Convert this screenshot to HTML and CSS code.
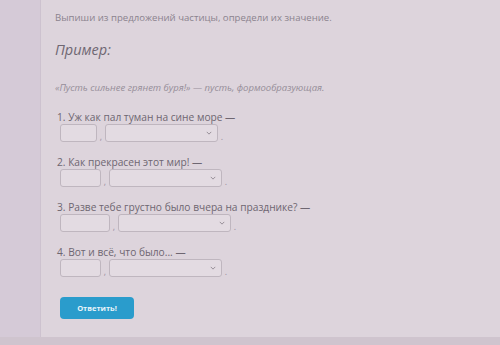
FILE: index.html
```html
<!DOCTYPE html>
<html lang="ru">
<head>
    <meta charset="UTF-8">
    <meta name="viewport" content="width=device-width, initial-scale=1.0">
    <title>Частицы</title>
    <link rel="stylesheet" href="styles.css">
</head>
<body>
    <div class="screen">
        <div class="side"></div>

        <div class="panel">
            <p class="task">Выпиши из предложений частицы, определи их значение.</p>

            <h2 class="example-title">Пример:</h2>
            <p class="example">«Пусть сильнее грянет буря!» — пусть, формообразующая.</p>

            <!-- Вопросы -->
            <div class="item">
                <div class="label">1. Уж как пал туман на сине море —</div>
                <div class="answer">
                    <span class="box w1"></span><span class="sep">,</span>
                    <span class="select"><svg viewBox="0 0 8 5" width="6" height="4"><path d="M1 1l3 3 3-3" fill="none" stroke="#8f8790" stroke-width="1.2"/></svg></span><span class="sep">.</span>
                </div>
            </div>

            <div class="item">
                <div class="label">2. Как прекрасен этот мир! —</div>
                <div class="answer">
                    <span class="box w2"></span><span class="sep">,</span>
                    <span class="select"><svg viewBox="0 0 8 5" width="6" height="4"><path d="M1 1l3 3 3-3" fill="none" stroke="#8f8790" stroke-width="1.2"/></svg></span><span class="sep">.</span>
                </div>
            </div>

            <div class="item">
                <div class="label">3. Разве тебе грустно было вчера на празднике? —</div>
                <div class="answer">
                    <span class="box w3"></span><span class="sep">,</span>
                    <span class="select"><svg viewBox="0 0 8 5" width="6" height="4"><path d="M1 1l3 3 3-3" fill="none" stroke="#8f8790" stroke-width="1.2"/></svg></span><span class="sep">.</span>
                </div>
            </div>

            <div class="item">
                <div class="label">4. Вот и всё, что было... —</div>
                <div class="answer">
                    <span class="box w2"></span><span class="sep">,</span>
                    <span class="select"><svg viewBox="0 0 8 5" width="6" height="4"><path d="M1 1l3 3 3-3" fill="none" stroke="#8f8790" stroke-width="1.2"/></svg></span><span class="sep">.</span>
                </div>
            </div>

            <button class="btn-answer">Ответить!</button>
        </div>
    </div>
</body>
</html>
```

FILE: styles.css
```css
/* Style général */
body {
    margin: 0;
    background-color: #cfc4ce;
    font-family: 'Open Sans', 'Noto Sans', sans-serif;
    color: #7d7480;
}

.screen {
    display: flex;
    height: 337px;
}

.side {
    width: 40px;
    background-color: #d5cad7;
    border-right: 1px solid #cdc2cf;
}

.panel {
    flex: 1;
    background-color: #ddd4dc;
    padding: 11px 0 0 14px;
}

/* Textes */
.task {
    margin: 0;
    font-size: 9.6px;
    line-height: 14px;
    color: #8b838e;
}

.example-title {
    margin: 15px 0 0;
    font-size: 14.5px;
    line-height: 20px;
    font-weight: normal;
    font-style: italic;
    color: #6f6772;
}

.example {
    margin: 22px 0 0;
    font-size: 9.5px;
    line-height: 12px;
    font-style: italic;
    color: #968e99;
}

/* Questions */
.item {
    margin-top: 17px;
    padding-left: 2px;
}
.item + .item {
    margin-top: 14px;
}

.label {
    font-size: 10.2px;
    line-height: 12px;
    color: #6e6671;
}

.answer {
    display: flex;
    align-items: flex-end;
    margin-top: 1px;
    padding-left: 3px;
}

.box, .select {
    height: 16px;
    border: 1px solid #bfb6bf;
    border-radius: 3px;
    background-color: #e3dbe2;
}
.w1 { width: 35px; }
.w2 { width: 39px; }
.w3 { width: 48px; }

.select {
    width: 106px;
    display: flex;
    align-items: center;
    justify-content: flex-end;
    padding-right: 5px;
    box-sizing: content-box;
}

.sep {
    width: 8px;
    text-align: center;
    font-size: 9px;
    line-height: 10px;
    color: #9a919c;
}

/* Bouton */
.btn-answer {
    margin: 20px 0 0 5px;
    width: 74px;
    height: 22px;
    border: none;
    border-radius: 4px;
    background-color: #2a9ccc;
    color: #e8f4fa;
    font-family: inherit;
    font-size: 7.5px;
    font-weight: bold;
    cursor: pointer;
}
```
